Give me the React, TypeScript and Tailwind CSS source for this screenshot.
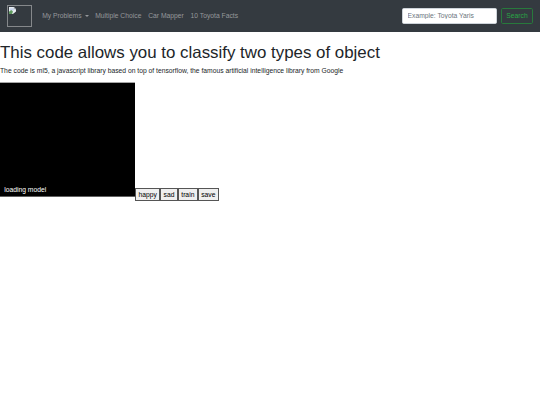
import type { ReactNode } from "react";

const BrokenImage = () => (
  <div className="h-[22px] w-[25px] border border-[#85888b] shrink-0">
    <svg viewBox="0 0 16 16" className="h-[7px] w-[7px] ml-px mt-px">
      <path d="M0 0h11l5 5v5L9 16H0z" fill="#e9edf2" />
      <path d="M2 3h9v5H2z" fill="#c5d3ea" />
      <path d="M0 16v-5l5-4 4 3-2 6z" fill="#5f9a5e" />
      <path d="M11 0v5h5z" fill="#a9afb5" />
    </svg>
  </div>
);

const NavLink = ({ children, className }: { children: ReactNode; className?: string }) => (
  <a href="#" className={`flex items-center whitespace-nowrap ${className ?? ""}`}>
    {children}
  </a>
);

const Navbar = () => (
  <nav className="flex h-8 items-center bg-[#343a40] pl-[7px] pr-[6.75px] text-[#95989b]">
    <BrokenImage />
    <div className="ml-[10.2px] flex gap-[6.75px]">
      <NavLink className="w-[46.3px]">
        My Problems
        <span className="ml-[3px] border-x-2 border-t-2 border-x-transparent border-t-[#95989b]" />
      </NavLink>
      <NavLink>Multiple Choice</NavLink>
      <NavLink>Car Mapper</NavLink>
      <NavLink>10 Toyota Facts</NavLink>
    </div>
    <form className="ml-auto flex gap-[3.4px]">
      <input
        type="search"
        placeholder="Example: Toyota Yaris"
        className="h-4 w-[95.5px] rounded-[1.7px] border border-[#ced4da] bg-white px-[4.7px] pb-px placeholder:text-[#6c757d] outline-none"
      />
      <button
        type="button"
        className="h-4 w-[32.5px] rounded-[1.7px] border border-[#28793c] text-[#28a745]"
      >
        Search
      </button>
    </form>
  </nav>
);

const App = () => {
  const actions = ["happy", "sad", "train", "save"];

  return (
    <div className="h-[405px] overflow-hidden bg-white font-['Liberation_Sans',sans-serif] text-[6.75px] leading-[10px] text-[#212529]">
      <Navbar />
      <h1 className="mt-[10.5px] whitespace-nowrap text-[16.89px] leading-[20.25px]">
        This code allows you to classify two types of object
      </h1>
      <p className="mt-[3.25px]">
        The code is ml5, a javascript library based on top of tensorflow, the
        famous artificial intelligence library from Google
      </p>
      <div className="mt-[6px] flex items-start">
        <div className="flex h-[115px] w-[135px] items-end border-t border-b border-t-[#a6a6a6] border-b-[#606060] bg-black pb-px pl-[4.2px] text-white">
          loading model
        </div>
        <div className="mt-[106px] flex">
          {actions.map((action) => (
            <button
              key={action}
              className="h-[13px] border border-[#555] bg-[#efefef] px-[2.4px] text-black"
            >
              {action}
            </button>
          ))}
        </div>
      </div>
    </div>
  );
};

export default App;
